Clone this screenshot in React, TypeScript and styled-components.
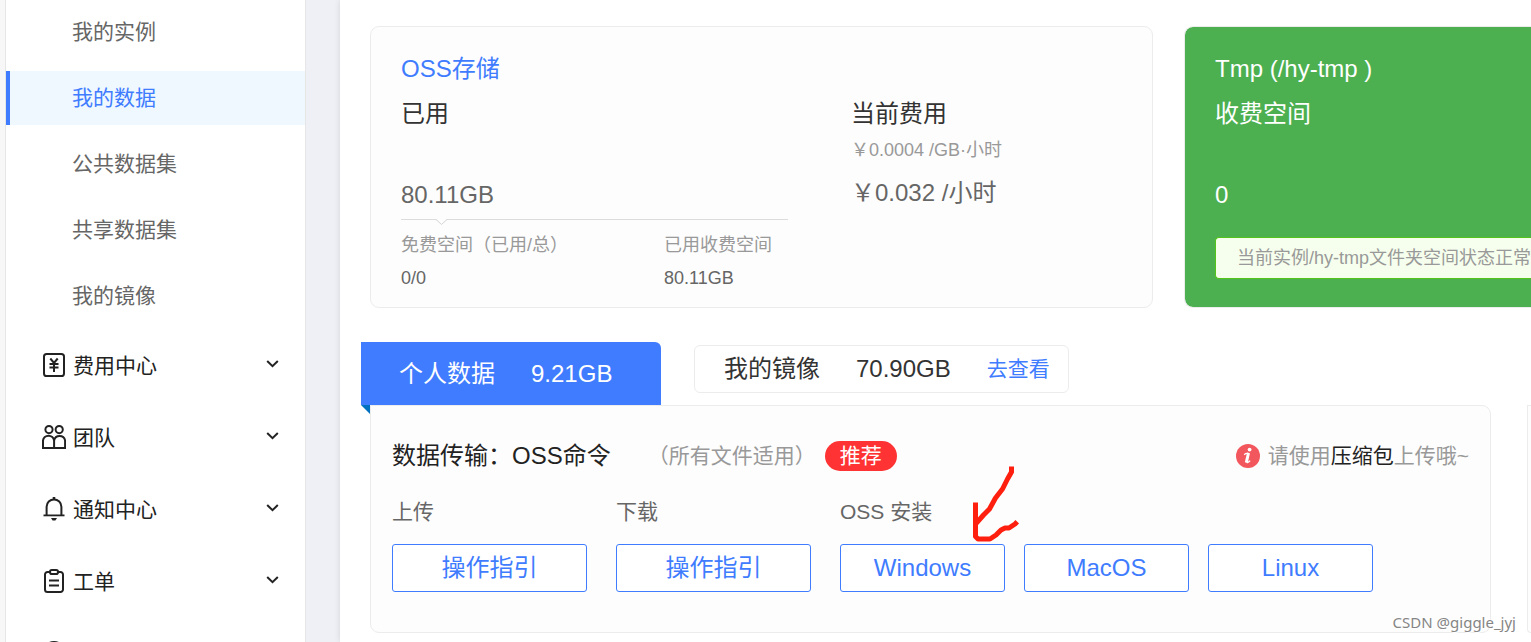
import React from 'react';
import styled, { createGlobalStyle, css } from 'styled-components';

const BLUE = '#407cff';
const LINE = '#ececec';

const GlobalStyle = createGlobalStyle`
  *, *::before, *::after { box-sizing: border-box; }
  body {
    margin: 0;
    background: #fff;
    color: #333;
    font-family: 'Liberation Sans', 'Noto Sans CJK SC', sans-serif;
    font-size: 21px;
    line-height: 32px;
  }
  button { font: inherit; color: inherit; background: none; border: 0; padding: 0; cursor: pointer; }
  a { text-decoration: none; color: inherit; }
  h2, h3, p, ul, dl, dd { margin: 0; padding: 0; font-weight: 400; }
  ul { list-style: none; }
`;

const Page = styled.div`
  position: relative;
  display: flex;
  height: 100vh;
  overflow: hidden;
  background: #eff0f5;
`;

/* ---------- sidebar ---------- */

const Rail = styled.div`
  flex: 0 0 6px;
  background: #f7f7f7;
  border-right: 1px solid #e6e6e6;
`;

const Sidebar = styled.nav`
  flex: 0 0 300px;
  background: #fff;
  border-right: 1px solid #e6e6e6;
  overflow: hidden;
`;

const SubMenu = styled.ul`
  display: flex;
  flex-direction: column;
  gap: 12px;
  padding: 5px 0 7px;
`;

const SubLink = styled.a<{ $active?: boolean }>`
  display: block;
  height: 54px;
  line-height: 54px;
  padding-left: 62px;
  border-left: 4px solid transparent;
  color: #666;
  ${(p) =>
    p.$active &&
    css`
      color: ${BLUE};
      background: #eff7ff;
      border-left-color: ${BLUE};
    `}
`;

const GroupButton = styled.button`
  display: flex;
  align-items: center;
  width: 100%;
  height: 72px;
  padding: 0 26px 0 36px;
  color: #222;
  text-align: left;

  svg { display: block; margin-bottom: 3px; }
`;

const GroupLabel = styled.span`
  flex: 1;
  padding-left: 7px;
`;

const GroupPeek = styled.div`
  padding: 23px 0 0 36px;
`;

/* ---------- content ---------- */

const Main = styled.main`
  flex: 1;
  min-width: 0;
  margin-left: 34px;
  padding: 26px 0 0 30px;
  background: #fff;
  box-shadow: 0 0 6px rgba(0, 0, 0, 0.12);
`;

const CardRow = styled.div`
  display: flex;
  gap: 31px;
`;

const Card = styled.section`
  border: 1px solid ${LINE};
  border-radius: 9px;
  background: #fdfdfd;
  padding: 20px 30px 12px;
`;

const StorageCard = styled(Card)`
  display: flex;
  flex: 1;
  min-width: 0;
`;

const TmpCard = styled(Card)`
  flex: 0 0 347px;
  padding-right: 0;
  border-right: 0;
  border-radius: 9px 0 0 9px;
  background: #4caf50;
  background-clip: padding-box;
  color: #fff;
  overflow: hidden;
`;

const UsageColumn = styled.div`
  flex: 0 0 387px;
  margin-right: 63px;
`;

const Title = styled.h2<{ $accent?: boolean }>`
  height: 45px;
  font-size: 24px;
  line-height: 44px;
  ${(p) => p.$accent && `color: ${BLUE};`}
`;

const Figure = styled.p<{ $muted?: boolean }>`
  margin-top: 35px;
  font-size: 24px;
  line-height: 45px;
  ${(p) => p.$muted && 'color: #666;'}
`;

const Divider = styled.div`
  height: 10px;
  margin-top: 2px;
  border-top: 1px solid #dcdcdc;

  svg { display: block; margin: -1px 0 0 34px; }
`;

const Breakdown = styled.dl`
  display: grid;
  grid-template-columns: 263px 1fr;
  font-size: 18px;
  line-height: 33px;

  dt { color: #999; white-space: nowrap; }
  dd { color: #666; }
`;

const CostColumn = styled.div`
  padding-top: 45px;
`;

const UnitPrice = styled.p`
  font-size: 18px;
  line-height: 26px;
  color: #999;
`;

const TotalPrice = styled.p`
  font-size: 24px;
  line-height: 60px;
  color: #666;
`;

const Notice = styled.p`
  height: 42px;
  margin-top: 20px;
  padding-left: 21px;
  border: 1px solid #52c41a;
  border-right: 0;
  border-radius: 4px 0 0 4px;
  background: #f6ffed;
  color: #999;
  font-size: 18px;
  line-height: 40px;
  white-space: nowrap;
`;

/* ---------- tabs ---------- */

const TabRow = styled.div`
  display: flex;
  gap: 33px;
  margin-top: 34px;
  margin-left: -9px;
  font-size: 24px;
`;

const ActiveTab = styled.button`
  position: relative;
  display: flex;
  align-items: center;
  gap: 36px;
  width: 300px;
  height: 63px;
  padding-left: 38px;
  border-radius: 0 6px 0 0;
  background: ${BLUE};
  color: #fff;

  &::after {
    content: '';
    position: absolute;
    top: 100%;
    left: 0;
    border-top: 9px solid #0070c0;
    border-left: 9px solid transparent;
  }
`;

const ImageTab = styled.div`
  display: flex;
  align-items: center;
  gap: 36px;
  height: 48px;
  margin-top: 3px;
  padding: 0 18px 0 29px;
  border: 1px solid ${LINE};
  border-radius: 6px;
`;

const ViewLink = styled.a`
  color: ${BLUE};
  font-size: 21px;
`;

/* ---------- transfer panel ---------- */

const PanelRow = styled.div`
  display: flex;
  gap: 36px;
`;

const Panel = styled.section`
  flex: 1;
  min-width: 0;
  height: 228px;
  padding: 27px 21px 0;
  border: 1px solid ${LINE};
  border-radius: 0 9px 9px 9px;
  background: #fdfdfd;
`;

const NextPanel = styled.div`
  flex: 0 0 4px;
  border: 1px solid ${LINE};
  border-right: 0;
  border-radius: 0 0 0 9px;
  background: #fdfdfd;
`;

const PanelHead = styled.div`
  display: flex;
  align-items: center;
  height: 46px;
  white-space: nowrap;
`;

const PanelTitle = styled.h3`
  font-size: 24px;
  color: #222;
`;

const Scope = styled.span`
  margin-left: 37px;
  color: #999;
`;

const Badge = styled.span`
  height: 30px;
  margin-left: 9px;
  padding: 0 15px;
  border-radius: 15px;
  background: #ff3333;
  color: #fff;
  line-height: 30px;
`;

const Tip = styled.p`
  display: flex;
  align-items: center;
  gap: 8px;
  margin-left: auto;
  color: #999;

  strong { font-weight: 400; color: #222; }
  svg { display: block; }
`;

const Actions = styled.div`
  display: flex;
  gap: 29px;
  margin-top: 17px;
`;

const ActionGroup = styled.div`
  position: relative;
  color: #666;
`;

const Buttons = styled.div`
  display: flex;
  gap: 19px;
  margin-top: 16px;
`;

const OutlineButton = styled.button<{ $wide?: boolean }>`
  width: ${(p) => (p.$wide ? 195 : 165)}px;
  height: 48px;
  border: 1px solid ${BLUE};
  border-radius: 3px;
  background: #fff;
  color: ${BLUE};
  font-size: 24px;
  line-height: 46px;
`;

const Arrow = styled.svg`
  position: absolute;
  top: -32px;
  left: 130px;
  pointer-events: none;
`;

const Watermark = styled.span`
  position: absolute;
  right: 15px;
  bottom: 9px;
  color: #858585;
  font-family: 'Noto Sans', sans-serif;
  font-size: 15px;
  line-height: 22px;
  text-shadow: 1px 1px 0 #fff, -1px -1px 0 #fff;
`;

/* ---------- icons ---------- */

const Icon = ({ children }: { children: React.ReactNode }) => (
  <svg width="24" height="24" viewBox="0 0 24 24" fill="none" stroke="#222" strokeWidth="2" aria-hidden="true">
    {children}
  </svg>
);

const YenIcon = () => (
  <Icon>
    <rect x="2" y="1" width="20" height="22" rx="2.6" />
    <path d="M8.3 5.500 12 10 15.700 5.500M12 10v9M7.500 11h9M7.500 14.600h9" />
  </Icon>
);

const TeamIcon = () => (
  <Icon>
    <circle cx="7" cy="4.600" r="3.600" />
    <circle cx="17.200" cy="4.600" r="3.600" />
    <path d="M1 23v-7.500a5.600 5.600 0 0 1 11.100 0V23zM12.100 23v-7.500a5.600 5.600 0 0 1 11 0V23z" />
  </Icon>
);

const BellIcon = () => (
  <Icon>
    <path d="M4.600 18V9.800a7.400 7.400 0 0 1 14.800 0V18" />
    <path d="M1.500 18.400h21" strokeWidth="1.800" />
    <path d="M12 0v3" strokeWidth="2.600" />
    <path d="M9 21h6l-1.600 2.600h-2.800z" fill="#222" stroke="none" />
  </Icon>
);

const ClipboardIcon = () => (
  <Icon>
    <path d="M8 3H5.500A2.500 2.500 0 0 0 3 5.500V20.500A2.500 2.500 0 0 0 5.500 23h13a2.500 2.500 0 0 0 2.500-2.500V5.500A2.500 2.500 0 0 0 18.500 3H16" />
    <rect x="8" y="1" width="8" height="4" rx="1.800" />
    <path d="M7 11.500h10M7 16.500h10" strokeWidth="1.800" />
  </Icon>
);

const CircleIcon = () => (
  <Icon>
    <circle cx="12" cy="12" r="11" />
  </Icon>
);

const Chevron = () => (
  <svg width="13" height="10" viewBox="0 0 13 10" fill="none" stroke="#222" strokeWidth="2" aria-hidden="true">
    <path d="M1.200 1 6.500 6.200 11.800 1" />
  </svg>
);

const InfoIcon = () => (
  <svg width="24" height="24" viewBox="0 0 24 24" aria-hidden="true">
    <circle cx="12" cy="12" r="12" fill="#f2575d" />
    <circle cx="13.600" cy="5.600" r="1.900" fill="#fff" />
    <path d="M8.200 10.800 9.600 9.600 12.400 9.200M10.600 18.400q.6.600 1.600-.1l2-1.500" fill="none" stroke="#fff" strokeWidth="1.300" />
    <path d="M12.500 9 10.300 18.600" stroke="#fff" strokeWidth="3" />
  </svg>
);

const subItems = ['我的实例', '我的数据', '公共数据集', '共享数据集', '我的镜像'];

const groups = [
  { label: '费用中心', icon: <YenIcon /> },
  { label: '团队', icon: <TeamIcon /> },
  { label: '通知中心', icon: <BellIcon /> },
  { label: '工单', icon: <ClipboardIcon /> },
];

const systems = ['Windows', 'MacOS', 'Linux'];

export default function App() {
  return (
    <Page lang="zh-CN">
      <GlobalStyle />
      <Rail />
      <Sidebar>
        <SubMenu>
          {subItems.map((label) => (
            <li key={label}>
              <SubLink href="#" $active={label === '我的数据'}>
                {label}
              </SubLink>
            </li>
          ))}
        </SubMenu>
        {groups.map((group) => (
          <GroupButton key={group.label} type="button">
            {group.icon}
            <GroupLabel>{group.label}</GroupLabel>
            <Chevron />
          </GroupButton>
        ))}
        <GroupPeek>
          <CircleIcon />
        </GroupPeek>
      </Sidebar>

      <Main>
        <CardRow>
          <StorageCard>
            <UsageColumn>
              <Title $accent>OSS存储</Title>
              <Title>已用</Title>
              <Figure $muted>80.11GB</Figure>
              <Divider>
                <svg width="13" height="7" viewBox="0 0 13 7" aria-hidden="true">
                  <path d="M1 0h11L6.500 5.500z" fill="#fdfdfd" />
                  <path d="M.5 0 6.500 5.500 12.500 0" fill="none" stroke="#d4d4d4" />
                </svg>
              </Divider>
              <Breakdown>
                <dt>免费空间（已用/总）</dt>
                <dt>已用收费空间</dt>
                <dd>0/0</dd>
                <dd>80.11GB</dd>
              </Breakdown>
            </UsageColumn>
            <CostColumn>
              <Title>当前费用</Title>
              <UnitPrice>￥0.0004 /GB·小时</UnitPrice>
              <TotalPrice>￥0.032 /小时</TotalPrice>
            </CostColumn>
          </StorageCard>

          <TmpCard>
            <Title>Tmp (/hy-tmp )</Title>
            <Title>收费空间</Title>
            <Figure>0</Figure>
            <Notice>当前实例/hy-tmp文件夹空间状态正常</Notice>
          </TmpCard>
        </CardRow>

        <TabRow>
          <ActiveTab type="button">
            <span>个人数据</span>
            <span>9.21GB</span>
          </ActiveTab>
          <ImageTab>
            <span>我的镜像</span>
            <span>70.90GB</span>
            <ViewLink href="#">去查看</ViewLink>
          </ImageTab>
        </TabRow>

        <PanelRow>
          <Panel>
            <PanelHead>
              <PanelTitle>数据传输：OSS命令</PanelTitle>
              <Scope>（所有文件适用）</Scope>
              <Badge>推荐</Badge>
              <Tip>
                <InfoIcon />
                <span>
                  请使用<strong>压缩包</strong>上传哦~
                </span>
              </Tip>
            </PanelHead>
            <Actions>
              <ActionGroup>
                <p>上传</p>
                <Buttons>
                  <OutlineButton type="button" $wide>操作指引</OutlineButton>
                </Buttons>
              </ActionGroup>
              <ActionGroup>
                <p>下载</p>
                <Buttons>
                  <OutlineButton type="button" $wide>操作指引</OutlineButton>
                </Buttons>
              </ActionGroup>
              <ActionGroup>
                <p>OSS 安装</p>
                <Buttons>
                  {systems.map((name) => (
                    <OutlineButton key={name} type="button">{name}</OutlineButton>
                  ))}
                </Buttons>
                <Arrow width="52" height="80" viewBox="0 0 52 80" fill="none" stroke="#ff1f0f" strokeWidth="5" strokeLinejoin="round" strokeLinecap="square" aria-hidden="true">
                  <path d="M41.500 5v3L37.500 15l-5 10-7 9-6 11-6 6-7 8" />
                  <path d="M5.500 41v31.500l2.500 2.500h12l6-4 5-5 4-2h4l6-4 .5-.5" />
                </Arrow>
              </ActionGroup>
            </Actions>
          </Panel>
          <NextPanel />
        </PanelRow>
      </Main>
      <Watermark>CSDN @giggle_jyj</Watermark>
    </Page>
  );
}
